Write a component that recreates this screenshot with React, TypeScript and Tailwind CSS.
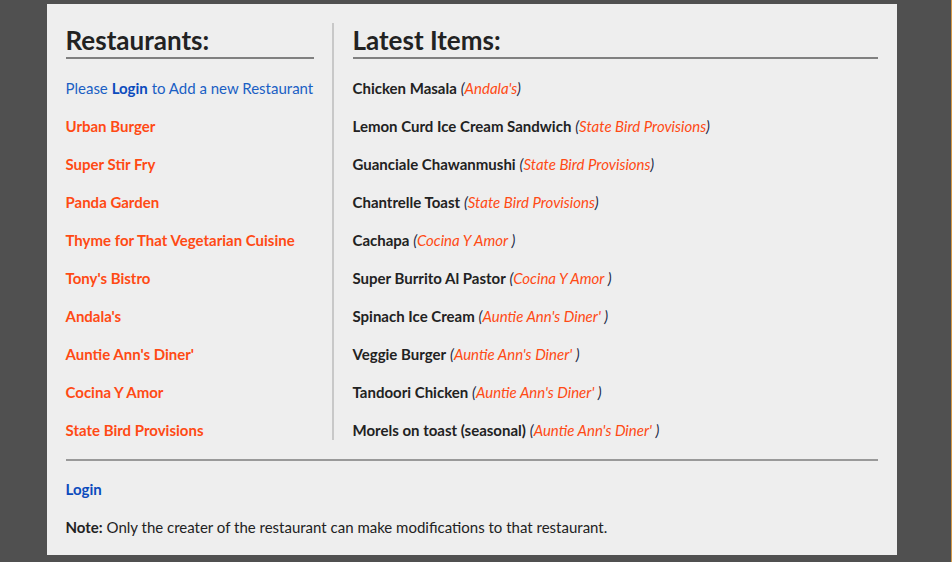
const restaurants = [
  'Urban Burger',
  'Super Stir Fry',
  'Panda Garden',
  'Thyme for That Vegetarian Cuisine',
  "Tony's Bistro",
  "Andala's",
  "Auntie Ann's Diner'",
  'Cocina Y Amor',
  'State Bird Provisions',
];

const items: [string, string][] = [
  ['Chicken Masala', "Andala's"],
  ['Lemon Curd Ice Cream Sandwich', 'State Bird Provisions'],
  ['Guanciale Chawanmushi', 'State Bird Provisions'],
  ['Chantrelle Toast', 'State Bird Provisions'],
  ['Cachapa', 'Cocina Y Amor '],
  ['Super Burrito Al Pastor', 'Cocina Y Amor '],
  ['Spinach Ice Cream', "Auntie Ann's Diner' "],
  ['Veggie Burger', "Auntie Ann's Diner' "],
  ['Tandoori Chicken', "Auntie Ann's Diner' "],
  ['Morels on toast (seasonal)', "Auntie Ann's Diner' "],
];

export default function App() {
  return (
    <div
      className="min-h-[562px] bg-[#505050] border-r border-[#d39a4a] flex justify-center items-start"
      style={{ fontFamily: 'Lato, "Open Sans", sans-serif' }}
    >
      <div className="w-[850px] mt-1 ml-[-8px] bg-[#eeeeee] px-[19px] pt-[19px] text-[15px] text-[#222]">
        <div className="flex">
          <div className="w-[268px] pr-[18px] border-r-2 border-[#c8c8c8]">
            <h1 className="text-[26px] font-bold leading-[34px] border-b-2 border-[#808080] text-[#222]">
              Restaurants:
            </h1>
            <div className="flex flex-col gap-[19px] mt-[20px] leading-[19px]">
              <p className="text-[#1a5fc4] whitespace-nowrap">
                Please <span className="font-bold text-[#0b4bbd]">Login</span> to Add a new Restaurant
              </p>
              {restaurants.map((r) => (
                <p key={r} className="font-bold text-[#ff4a14] whitespace-nowrap">
                  {r}
                </p>
              ))}
            </div>
          </div>
          <div className="flex-1 pl-[19px]">
            <h1 className="text-[26px] font-bold leading-[34px] border-b-2 border-[#808080] text-[#222]">
              Latest Items:
            </h1>
            <div className="flex flex-col gap-[19px] mt-[20px] leading-[19px]">
              {items.map(([name, place]) => (
                <p key={name} className="whitespace-nowrap">
                  <span className="font-bold">{name}</span>{' '}
                  <span className="italic text-[#1c2a48]">
                    (<span className="text-[#ff4a14]">{place}</span>)
                  </span>
                </p>
              ))}
            </div>
          </div>
        </div>
        <div className="border-t-2 border-[#999] mt-[19px] pt-[19px] pb-[18px] leading-[19px]">
          <p className="font-bold text-[#0b4bbd]">Login</p>
          <p className="mt-[19px]">
            <span className="font-bold">Note:</span> Only the creater of the restaurant can make modifications to that restaurant.
          </p>
        </div>
      </div>
    </div>
  );
}
